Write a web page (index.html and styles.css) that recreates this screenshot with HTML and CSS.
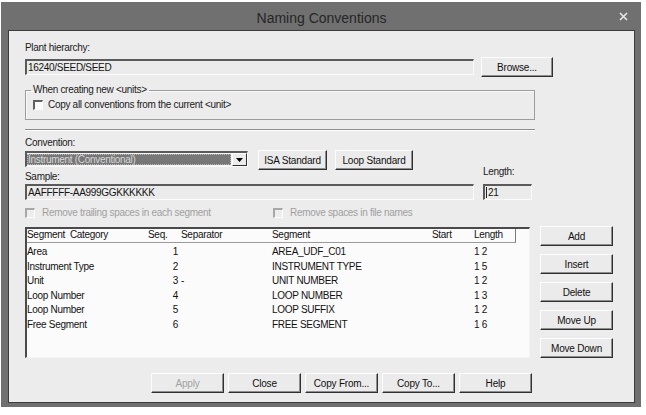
FILE: index.html
```html
<!DOCTYPE html>
<html>
<head>
<meta charset="utf-8">
<title>Naming Conventions</title>
<link rel="stylesheet" href="styles.css">
</head>
<body>
<div class="window">
  <div class="titlebar">
    <span class="title">Naming Conventions</span>
    <span class="close"><svg width="9" height="9" viewBox="0 0 9 9"><path d="M1 1L8 8M8 1L1 8" stroke="#e8e8e8" stroke-width="1.6"/></svg></span>
  </div>
  <div class="client">
    <div class="label">Plant hierarchy:</div>
    <div class="row r-plant">
      <div class="field f-plant">16240/SEED/SEED</div>
      <button class="btn b-browse">Browse...</button>
    </div>
    <fieldset class="group">
      <legend>When creating new &lt;units&gt;</legend>
      <div class="check"><span class="box"></span>Copy all conventions from the current &lt;unit&gt;</div>
    </fieldset>
    <div class="sep"></div>
    <div class="label l-conv">Convention:</div>
    <div class="row r-conv">
      <div class="combo">
        <span class="combo-text"><span class="sel">Instrument (Conventional)</span></span>
        <span class="combo-btn"><svg width="7" height="4" viewBox="0 0 7 4"><path d="M0 0H7L3.5 4Z" fill="#000"/></svg></span>
      </div>
      <button class="btn b-isa">ISA Standard</button>
      <button class="btn b-loop">Loop Standard</button>
    </div>
    <div class="row r-sample">
      <div class="col c-sample">
        <div class="label">Sample:</div>
        <div class="field f-sample">AAFFFFF-AA999GGKKKKKK</div>
      </div>
      <div class="col c-length">
        <div class="label">Length:</div>
        <div class="field f-length"><span class="caret"></span>21</div>
      </div>
    </div>
    <div class="row r-opts">
      <div class="check disabled o1"><span class="box"></span>Remove trailing spaces in each segment</div>
      <div class="check disabled"><span class="box"></span>Remove spaces in file names</div>
    </div>
    <div class="row r-main">
      <div class="list">
        <div class="lhead grid">
          <span>Segment&nbsp; Category</span>
          <span>Seq.</span>
          <span>Separator</span>
          <span>Segment</span>
          <span>Start</span>
          <span>Length</span>
        </div>
        <div class="lbody">
          <div class="grid lrow"><span>Area</span><span class="seq">1</span><span class="sepc"></span><span>AREA_UDF_C01</span><span></span><span class="len">12</span></div>
          <div class="grid lrow"><span>Instrument Type</span><span class="seq">2</span><span class="sepc"></span><span>INSTRUMENT TYPE</span><span></span><span class="len">15</span></div>
          <div class="grid lrow"><span>Unit</span><span class="seq">3</span><span class="sepc">-</span><span>UNIT NUMBER</span><span></span><span class="len">12</span></div>
          <div class="grid lrow"><span>Loop Number</span><span class="seq">4</span><span class="sepc"></span><span>LOOP NUMBER</span><span></span><span class="len">13</span></div>
          <div class="grid lrow"><span>Loop Number</span><span class="seq">5</span><span class="sepc"></span><span>LOOP SUFFIX</span><span></span><span class="len">12</span></div>
          <div class="grid lrow"><span>Free Segment</span><span class="seq">6</span><span class="sepc"></span><span>FREE SEGMENT</span><span></span><span class="len">16</span></div>
        </div>
      </div>
      <div class="side">
        <button class="btn">Add</button>
        <button class="btn">Insert</button>
        <button class="btn">Delete</button>
        <button class="btn">Move Up</button>
        <button class="btn">Move Down</button>
      </div>
    </div>
    <div class="row r-bottom">
      <button class="btn disabled-btn">Apply</button>
      <button class="btn">Close</button>
      <button class="btn">Copy From...</button>
      <button class="btn">Copy To...</button>
      <button class="btn">Help</button>
    </div>
  </div>
</div>
</body>
</html>
```
FILE: styles.css
```css
* { box-sizing: border-box; }

body {
  margin: 0;
  background: #ffffff;
  font-family: "Liberation Sans", Arial, sans-serif;
  font-size: 10px;
  color: #1a1a1a;
  letter-spacing: -0.3px;
}

.window {
  margin: 2px 0 0 1px;
  width: 640px;
  height: 405px;
  background: #707070;
  padding: 0 6px 4px 7px;
  display: flex;
  flex-direction: column;
}

.titlebar {
  height: 28px;
  flex: none;
  display: grid;
  grid-template-columns: 1fr auto 1fr;
  align-items: center;
}

.title {
  grid-column: 2;
  font-size: 14px;
  letter-spacing: 0;
  color: #262626;
  padding-top: 3px;
}

.close {
  grid-column: 3;
  justify-self: end;
  margin-right: 7px;
  display: flex;
}

.client {
  flex: 1;
  background: #ececec;
  border: 1px solid #3c3c3c;
  padding: 11px 0 0 16px;
}

.label {
  height: 12px;
  line-height: 12px;
  white-space: nowrap;
}

.row { display: flex; }

.field {
  height: 16px;
  line-height: 13px;
  padding-left: 1px;
  border-style: solid;
  border-width: 2px 1px 1px 2px;
  border-color: #5a5a5a #fbfbfb #fbfbfb #5a5a5a;
  background: #ebebeb;
  white-space: nowrap;
  overflow: hidden;
  color: #141414;
  display: flex;
  align-items: center;
}

.caret {
  width: 1px;
  height: 11px;
  background: #222;
  margin-right: 1px;
}

.btn {
  height: 20px;
  font-family: inherit;
  font-size: 10px;
  letter-spacing: -0.2px;
  color: #101010;
  background: #ebebeb;
  border: 1px solid;
  border-color: #fdfdfd #303030 #303030 #fdfdfd;
  box-shadow: inset -1px -1px 0 #8e8e8e;
  padding: 0;
}

.disabled-btn { color: #a2a2a2; }

.r-plant {
  margin-top: 3px;
  height: 20px;
  align-items: center;
}

.f-plant { width: 449px; }

.b-browse { width: 72px; margin-left: 7px; }

.group {
  margin: 7px 0 0;
  width: 510px;
  padding: 3px 0 8px 7px;
  border: 1px solid #9c9c9c;
  box-shadow: inset 1px 1px 0 #fafafa;
  min-inline-size: 0;
}

.group legend {
  padding: 0 2px;
  margin-left: -2px;
  line-height: 12px;
}

.check {
  display: flex;
  align-items: center;
  height: 12px;
  line-height: 12px;
  white-space: nowrap;
}

.box {
  flex: none;
  width: 10px;
  height: 10px;
  border-style: solid;
  border-width: 2px 1px 1px 2px;
  border-color: #606060 #ffffff #ffffff #606060;
  background: #fbfbfb;
  margin-right: 5px;
}

.disabled { color: #a0a0a0; }
.disabled .box {
  border-color: #a8a8a8 #ffffff #ffffff #a8a8a8;
  background: #eeeeee;
  margin-right: 7px;
}

.sep {
  margin-top: 9px;
  width: 510px;
  height: 2px;
  border-top: 1px solid #8e8e8e;
  border-bottom: 1px solid #ffffff;
}

.l-conv { margin-top: 6px; }

.r-conv {
  margin-top: 1px;
  height: 20px;
  align-items: flex-start;
}

.combo {
  margin-top: 1px;
  width: 223px;
  height: 16px;
  display: flex;
  border-style: solid;
  border-width: 2px 1px 1px 2px;
  border-color: #5a5a5a #fbfbfb #fbfbfb #5a5a5a;
  background: #f4f4f4;
}

.combo-text {
  flex: 1;
  padding: 1px 1px 1px 0;
  display: flex;
}

.sel {
  flex: 1;
  background: #777777;
  color: #d6d6d6;
  line-height: 11px;
  padding-left: 1px;
  outline: 1px dotted #bcbcbc;
  outline-offset: -1px;
  white-space: nowrap;
}

.combo-btn {
  width: 15px;
  flex: none;
  display: flex;
  align-items: center;
  justify-content: center;
  background: #ebebeb;
  border: 1px solid;
  border-color: #fdfdfd #303030 #303030 #fdfdfd;
}

.b-isa { margin-left: 10px; width: 69px; }
.b-loop { margin-left: 8px; width: 78px; }

.r-sample {
  margin-top: -4px;
  align-items: flex-end;
}

.c-sample { width: 449px; }
.c-sample .field { margin-top: 1px; }
.c-length { width: 49px; margin-left: 9px; }
.c-length .field { margin-top: 6px; }

.r-opts {
  margin-top: 7px;
  height: 12px;
}

.o1 { width: 248px; }

.r-main { margin-top: 7px; }

.list {
  margin-top: 1px;
  width: 505px;
  height: 131px;
  border-style: solid;
  border-width: 2px 1px 1px 2px;
  border-color: #4a4a4a #f4f4f4 #f4f4f4 #4a4a4a;
  background: #fbfbfb;
  color: #121212;
}

.grid {
  display: grid;
  grid-template-columns: 121px 33px 91px 160px 42px 41px;
  width: 488px;
  white-space: nowrap;
}

.lhead {
  height: 14px;
  line-height: 12px;
  border-bottom: 1px solid #9a9a9a;
  border-right: 1px solid #7a7a7a;
  width: 489px;
}

.lbody { padding-top: 2px; }

.lrow {
  height: 14.5px;
  line-height: 14px;
}

.seq { text-align: right; padding-right: 3px; }
.sepc { padding-left: 0; }
.len { letter-spacing: 2.2px; }

.side {
  margin-left: 10px;
  display: flex;
  flex-direction: column;
  gap: 8px;
}

.side .btn { width: 73px; }

.r-bottom {
  margin-top: 15px;
  padding-left: 126px;
  gap: 4px;
}

.r-bottom .btn { width: 73px; }
```
